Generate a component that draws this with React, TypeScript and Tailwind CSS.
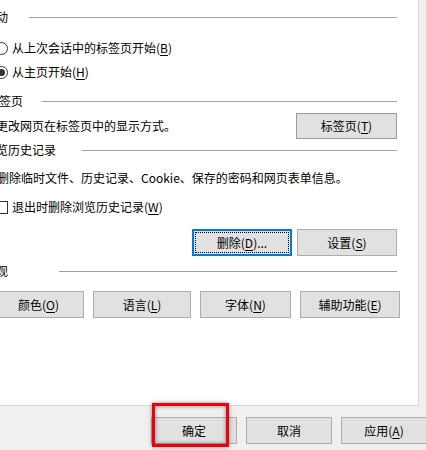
import type { ReactNode } from "react";

const font = "font-['Microsoft_YaHei','Noto_Sans_CJK_SC',sans-serif]";

function Key({ k }: { k: string }) {
  return (
    <>
      (<span className="underline underline-offset-2">{k}</span>)
    </>
  );
}

function Header({ title, mt }: { title: string; mt: string }) {
  return (
    <div className={`flex h-[18px] items-center ${mt}`}>
      <span className="whitespace-nowrap">{title}</span>
      <div className="h-px flex-1 bg-[#a0a0a0]" />
    </div>
  );
}

function Btn({ w, children, focused }: { w: string; children: ReactNode; focused?: boolean }) {
  if (focused) {
    return (
      <div className={`${w} flex h-[27px] items-center justify-center border-2 border-[#0078d7] bg-[#e1e1e1] p-[1px]`}>
        <div className="flex h-full w-full items-center justify-center border border-dotted border-black">{children}</div>
      </div>
    );
  }
  return <div className={`${w} flex h-[27px] shrink-0 items-center justify-center border border-[#adadad] bg-[#e1e1e1]`}>{children}</div>;
}

export default function App() {
  return (
    <div className={`relative h-[450px] w-[426px] overflow-hidden bg-[#f0f0f0] text-[12px] leading-[18px] text-black ${font}`}>
      <div className="h-[406px] w-[419px] overflow-hidden border-r border-b border-[#d9d9d9] bg-white">
        <div className="ml-[-16px] mr-[21px]">
          <div className="flex h-[18px] items-center pt-0 mt-[8px]">
            <span className="whitespace-nowrap">启动</span>
            <div className="ml-[21px] h-px flex-1 bg-[#a0a0a0]" />
          </div>

          <div className="mt-[13px] flex h-[18px] items-center pl-[11px]">
            <span className="h-[13px] w-[13px] rounded-full border border-[#333] bg-white" />
            <span className="ml-[4px] whitespace-nowrap">
              从上次会话中的标签页开始<Key k="B" />
            </span>
          </div>
          <div className="mt-[6px] flex h-[18px] items-center pl-[11px]">
            <span className="flex h-[13px] w-[13px] items-center justify-center rounded-full border border-[#333] bg-white">
              <span className="h-[7px] w-[7px] rounded-full bg-[#333]" />
            </span>
            <span className="ml-[4px] whitespace-nowrap">
              从主页开始<Key k="H" />
            </span>
          </div>

          <div className="mt-[11px] flex h-[18px] items-center pl-[3px]">
            <span className="whitespace-nowrap">标签页</span>
            <div className="ml-[19px] h-px flex-1 bg-[#a0a0a0]" />
          </div>
          <div className="mt-[3px] flex h-[26px] items-center justify-between pl-[12px]">
            <span className="whitespace-nowrap">更改网页在标签页中的显示方式。</span>
            <div className="flex h-[26px] w-[101px] items-center justify-center border border-[#8fa0ac] bg-[#e1e1e1]">
              标签页<Key k="T" />
            </div>
          </div>

          <div className="mt-[2px] flex h-[18px] items-center">
            <span className="whitespace-nowrap">浏览历史记录</span>
            <div className="ml-[26px] h-px flex-1 bg-[#a0a0a0]" />
          </div>
          <div className="mt-[10px] flex h-[18px] items-center pl-[13px]">
            <span className="whitespace-nowrap">删除临时文件、历史记录、Cookie、保存的密码和网页表单信息。</span>
          </div>
          <div className="mt-[11px] flex h-[18px] items-center pl-[11px]">
            <span className="h-[13px] w-[13px] border border-[#333] bg-white" />
            <span className="ml-[4px] whitespace-nowrap">
              退出时删除浏览历史记录<Key k="W" />
            </span>
          </div>
          <div className="mt-[13px] flex justify-end gap-[5px]">
            <Btn w="w-[100px]" focused>
              删除<Key k="D" />...
            </Btn>
            <Btn w="w-[100px]">
              设置<Key k="S" />
            </Btn>
          </div>

          <div className="mt-[6px] flex h-[18px] items-center">
            <span className="whitespace-nowrap">外观</span>
            <div className="ml-[51px] h-px flex-1 bg-[#a0a0a0]" />
          </div>
          <div className="mt-[11px] flex gap-[9px] pl-[9px]">
            <Btn w="w-[91px]">
              颜色<Key k="O" />
            </Btn>
            <Btn w="w-[98px]">
              语言<Key k="L" />
            </Btn>
            <Btn w="w-[91px]">
              字体<Key k="N" />
            </Btn>
            <Btn w="w-[100px]">
              辅助功能<Key k="E" />
            </Btn>
          </div>
        </div>
      </div>

      <div className="mt-[11px] flex gap-[9px] pl-[151px]">
        <Btn w="w-[86px]">确定</Btn>
        <Btn w="w-[86px]">取消</Btn>
        <Btn w="w-[86px]">
          应用<Key k="A" />
        </Btn>
      </div>

      <div className="absolute left-[152px] top-[403px] h-[44px] w-[77px] border-[3px] border-[#e8000b] shadow-[0_0_4px_rgba(0,0,0,0.45),inset_0_0_4px_rgba(0,0,0,0.45)]" />
    </div>
  );
}
